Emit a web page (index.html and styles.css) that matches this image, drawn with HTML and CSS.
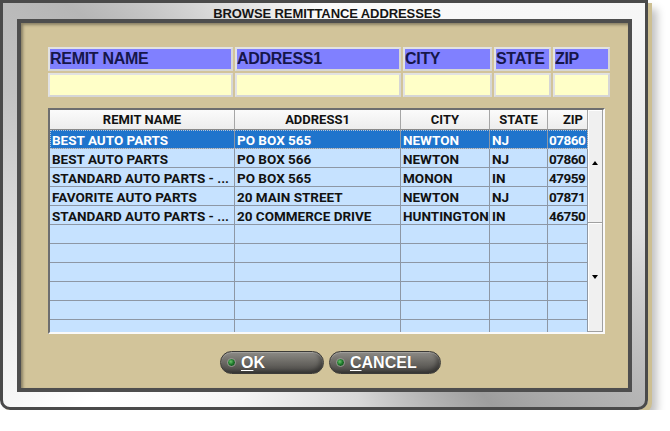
FILE: index.html
```html
<!DOCTYPE html>
<html>
<head>
<meta charset="utf-8">
<title>Browse Remittance Addresses</title>
<link rel="stylesheet" href="styles.css">
</head>
<body>
<div class="dialog">
  <div class="title">BROWSE REMITTANCE ADDRESSES</div>
  <div class="panel">
    <div class="filters">
      <div class="fh">REMIT NAME</div>
      <div class="fh">ADDRESS1</div>
      <div class="fh">CITY</div>
      <div class="fh">STATE</div>
      <div class="fh">ZIP</div>
      <div class="fi"></div>
      <div class="fi"></div>
      <div class="fi"></div>
      <div class="fi"></div>
      <div class="fi"></div>
    </div>
    <div class="grid">
      <div class="table">
        <div class="row head"><div class="c">REMIT NAME</div><div class="c">ADDRESS1</div><div class="c">CITY</div><div class="c">STATE</div><div class="c zip">ZIP</div></div>
        <div class="row sel"><div class="c">BEST AUTO PARTS</div><div class="c">PO BOX 565</div><div class="c">NEWTON</div><div class="c">NJ</div><div class="c zip">07860</div></div>
        <div class="row"><div class="c">BEST AUTO PARTS</div><div class="c">PO BOX 566</div><div class="c">NEWTON</div><div class="c">NJ</div><div class="c zip">07860</div></div>
        <div class="row"><div class="c">STANDARD AUTO PARTS - ...</div><div class="c">PO BOX 565</div><div class="c">MONON</div><div class="c">IN</div><div class="c zip">47959</div></div>
        <div class="row"><div class="c">FAVORITE AUTO PARTS</div><div class="c">20 MAIN STREET</div><div class="c">NEWTON</div><div class="c">NJ</div><div class="c zip">07871</div></div>
        <div class="row"><div class="c">STANDARD AUTO PARTS - ...</div><div class="c">20 COMMERCE DRIVE</div><div class="c">HUNTINGTON</div><div class="c">IN</div><div class="c zip">46750</div></div>
        <div class="row"><div class="c"></div><div class="c"></div><div class="c"></div><div class="c"></div><div class="c"></div></div>
        <div class="row"><div class="c"></div><div class="c"></div><div class="c"></div><div class="c"></div><div class="c"></div></div>
        <div class="row"><div class="c"></div><div class="c"></div><div class="c"></div><div class="c"></div><div class="c"></div></div>
        <div class="row"><div class="c"></div><div class="c"></div><div class="c"></div><div class="c"></div><div class="c"></div></div>
        <div class="row"><div class="c"></div><div class="c"></div><div class="c"></div><div class="c"></div><div class="c"></div></div>
        <div class="row"><div class="c"></div><div class="c"></div><div class="c"></div><div class="c"></div><div class="c"></div></div>
      </div>
      <div class="scroll">
        <div class="sb up"><span class="arrow-up"></span></div>
        <div class="sb down"><span class="arrow-down"></span></div>
      </div>
    </div>
    <div class="buttons">
      <div class="btn ok"><span class="led"></span><span class="lbl"><u>O</u>K</span></div>
      <div class="btn cancel"><span class="led"></span><span class="lbl"><u>C</u>ANCEL</span></div>
    </div>
  </div>
</div>
</body>
</html>
```
FILE: styles.css
```css
html, body {
  margin: 0;
  padding: 0;
  background: #ffffff;
}
body {
  font-family: "Liberation Sans", Arial, sans-serif;
}
.dialog {
  box-sizing: border-box;
  width: 648px;
  height: 410px;
  border: 3px solid #4a4a4a;
  border-radius: 0 0 10px 10px;
  padding: 0 13px 15px 14px;
  background: conic-gradient(from 0deg at 50% 50%,
    #fbfbfb 0deg, #f6f6f6 60deg, #dedede 95deg, #b4b4b4 122deg, #9e9e9e 140deg,
    #d8d8d8 170deg, #f6f6f6 205deg, #ffffff 230deg, #e2e2e2 260deg,
    #c2c2c2 290deg, #b6b6b6 308deg, #dadada 330deg, #fbfbfb 360deg);
  box-shadow: 4px 3px 0 #cdbf92, 9px 9px 9px rgba(0, 0, 0, 0.25);
}
.title {
  height: 16px;
  line-height: 21px;
  padding-left: 5px;
  text-align: center;
  font-size: 13px;
  font-weight: bold;
  color: #151515;
  white-space: nowrap;
  letter-spacing: -0.1px;
}
.panel {
  box-sizing: border-box;
  height: 373px;
  border: 4px solid #4e4e4e;
  background: #d2c49a;
  box-shadow: inset 2px 2px 3px rgba(0, 0, 0, 0.35);
  padding: 24px 0 0 27px;
  display: flex;
  flex-direction: column;
}
.filters {
  display: grid;
  grid-template-columns: 185px 166px 89px 57px 57px;
  grid-template-rows: 24px 24px;
  gap: 2px;
}
.fh, .fi {
  box-sizing: border-box;
  border: 2px solid #e2e2e2;
  border-bottom-color: #d6d6d6;
  border-right-color: #d6d6d6;
}
.fh {
  background: #8080ff;
  color: #16164a;
  font-size: 16px;
  font-weight: bold;
  line-height: 20px;
  letter-spacing: -0.3px;
  white-space: nowrap;
  overflow: hidden;
}
.fi {
  background: #ffffc8;
}
.grid {
  box-sizing: border-box;
  margin-top: 11px;
  width: 557px;
  height: 226px;
  border: 2px solid;
  border-color: #6e6e6e #fafafa #fafafa #6e6e6e;
  display: flex;
}
.table {
  width: 538px;
  overflow: hidden;
  background: #c6e2ff;
}
.row {
  display: grid;
  grid-template-columns: 185px 166px 89px 58px 40px;
  height: 19px;
  background: #c6e2ff;
}
.c {
  box-sizing: border-box;
  height: 19px;
  border-right: 1px solid #8d97a5;
  border-bottom: 1px solid #8d97a5;
  padding-left: 2px;
  font-family: Roboto, "Liberation Sans", sans-serif;
  font-weight: bold;
  font-size: 13.5px;
  line-height: 20px;
  color: #121212;
  white-space: nowrap;
  overflow: hidden;
}
.c.zip {
  padding-left: 1px;
  letter-spacing: -0.5px;
}
.head {
  height: 20px;
  background: linear-gradient(#fbfbfb, #ececec);
}
.head .c {
  height: 20px;
  padding-left: 0;
  text-align: center;
  font-size: 13px;
  letter-spacing: 0;
  border-right-color: #a6a6a6;
  border-bottom-color: #8a8a8a;
}
.head .c.zip {
  text-align: right;
  padding-right: 4px;
}
.sel {
  background: #1f74cc;
  outline: 1px dotted #b8c4d4;
  outline-offset: -1px;
}
.sel .c {
  color: #ffffff;
}
.scroll {
  width: 15px;
  display: flex;
  flex-direction: column;
  background: #f0f0f0;
}
.sb {
  box-sizing: border-box;
  display: flex;
  align-items: center;
  justify-content: center;
  background: #f0f0f0;
  border-right: 1px solid #a0a0a0;
  border-bottom: 1px solid #a0a0a0;
  box-shadow: inset 1px 1px 0 #ffffff;
}
.up {
  height: 113px;
  padding-bottom: 6px;
}
.down {
  height: 109px;
}
.arrow-up {
  width: 0;
  height: 0;
  border-left: 3.5px solid transparent;
  border-right: 3.5px solid transparent;
  border-bottom: 4px solid #000;
}
.arrow-down {
  width: 0;
  height: 0;
  border-left: 3.5px solid transparent;
  border-right: 3.5px solid transparent;
  border-top: 4px solid #000;
}
.buttons {
  display: flex;
  gap: 5px;
  margin-top: 17px;
  margin-left: 172px;
}
.btn {
  box-sizing: border-box;
  height: 23px;
  border-radius: 12px;
  border: 1px solid #3c3b38;
  background: linear-gradient(#8e8c87 0%, #75736e 35%, #5d5b57 70%, #4a4946 100%);
  box-shadow: inset 0 1px 1px rgba(255, 255, 255, 0.25), inset -3px -2px 4px rgba(0, 0, 0, 0.35);
  display: flex;
  align-items: center;
  padding-left: 6px;
  gap: 5px;
}
.ok {
  width: 104px;
}
.cancel {
  width: 112px;
}
.led {
  box-sizing: border-box;
  width: 9px;
  height: 9px;
  border-radius: 50%;
  border: 1px solid #9a9a94;
  background: radial-gradient(circle at 40% 38%, #6cc46c 0%, #1f7a2c 45%, #0b3d12 100%);
}
.lbl {
  color: #ffffff;
  font-size: 16px;
  font-weight: bold;
  line-height: 20px;
  text-shadow: 0 0 1px rgba(0, 0, 0, 0.4);
}
.lbl u {
  text-decoration-thickness: 1px;
  text-underline-offset: 2px;
}
```
